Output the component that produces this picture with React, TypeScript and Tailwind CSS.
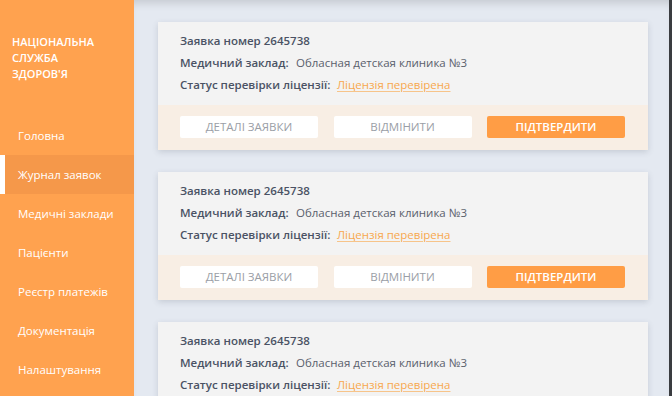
const navItems = [
  "Головна",
  "Журнал заявок",
  "Медичні заклади",
  "Пацієнти",
  "Реєстр платежів",
  "Документація",
  "Налаштування",
];

const RequestCard = () => {
  return (
    <div className="w-[490px] shrink-0 shadow-[0_2px_6px_rgba(60,70,90,0.18)]">
      <div className="bg-[#F3F3F3] pl-[22px] pt-[8px] pb-[9px] text-[11.5px] leading-[22px] text-[#4A5264]">
        <div className="font-semibold">Заявка номер 2645738</div>
        <div className="flex">
          <span className="font-semibold w-[116px]">Медичний заклад:</span>
          <span className="text-[#5A606C]">Обласная детская клиника №3</span>
        </div>
        <div className="flex">
          <span className="font-semibold w-[157px]">Статус перевірки ліцензії:</span>
          <a className="text-[#F7A84E] underline underline-offset-2 decoration-[#F7C48A]">
            Ліцензія перевірена
          </a>
        </div>
      </div>
      <div className="bg-[#F8EEE4] pl-[22px] pt-[11px] pb-[12px] flex gap-[15.5px]">
        <button className="w-[138px] h-[22px] bg-white rounded-[2px] text-[11.5px] uppercase text-[#9A9EA6]">
          Деталі заявки
        </button>
        <button className="w-[138px] h-[22px] bg-white rounded-[2px] text-[11.5px] uppercase text-[#9A9EA6]">
          Відмінити
        </button>
        <button className="w-[138px] h-[22px] bg-[#FF9D45] rounded-[2px] text-[11.5px] font-semibold uppercase text-white">
          Підтвердити
        </button>
      </div>
    </div>
  );
};

const App = () => {
  return (
    <div className="flex h-[396px] w-[672px] overflow-hidden font-['Open_Sans',sans-serif]">
      <aside className="w-[134px] shrink-0 bg-[#FFA24F] flex flex-col">
        <div className="pl-[12px] pt-[34px] text-[11px] leading-[16px] font-semibold text-white uppercase">
          Національна
          <br />
          Служба
          <br />
          Здоров'я
        </div>
        <nav className="mt-[34px] flex flex-col">
          {navItems.map((item, i) => (
            <div
              key={item}
              className={
                i === 1
                  ? "h-[39px] flex items-center pl-[13px] text-[11.5px] text-white bg-[#F5984A] border-l-[5px] border-white"
                  : "h-[39px] flex items-center pl-[18px] text-[11.5px] text-white"
              }
            >
              {item}
            </div>
          ))}
        </nav>
      </aside>
      <main className="flex-1 bg-[#E4E9F1] shadow-[inset_0_8px_8px_-5px_rgba(0,0,0,0.14)] pl-[24px] pt-[22px] flex flex-col gap-[22px]">
        <RequestCard />
        <RequestCard />
        <RequestCard />
      </main>
      <div className="w-[3px] shrink-0 bg-[#3A3C40]"></div>
    </div>
  );
};

export default App;
